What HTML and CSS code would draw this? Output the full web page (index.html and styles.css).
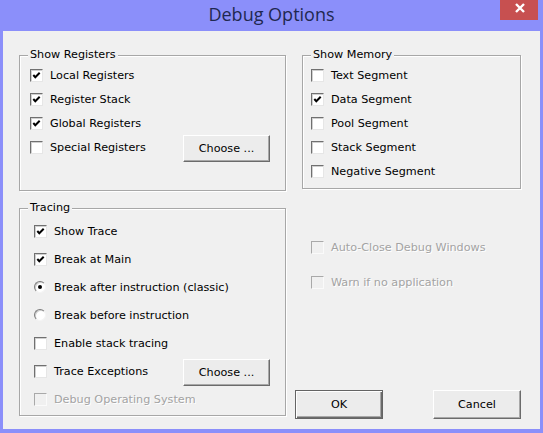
FILE: index.html
```html
<!DOCTYPE html>
<html>
<head>
<meta charset="utf-8">
<link rel="stylesheet" href="styles.css">
</head>
<body>
<div class="window">
  <div class="titlebar">
    <span class="title">Debug Options</span>
    <div class="close"><svg width="12" height="10" viewBox="0 0 12 10"><path d="M2 1 L10 9 M10 1 L2 9" stroke="#fff" stroke-width="2.4" fill="none"/></svg></div>
  </div>
  <div class="client">
    <div class="col-left">
      <div class="group g-registers">
        <span class="legend">Show Registers</span>
        <div class="row"><span class="cb on"><svg width="11" height="11" viewBox="0 0 11 11"><path d="M2.3 5 L4.3 7.2 L8.7 2.8" stroke="#000" stroke-width="2" fill="none"/></svg></span><span>Local Registers</span></div>
        <div class="row"><span class="cb on"><svg width="11" height="11" viewBox="0 0 11 11"><path d="M2.3 5 L4.3 7.2 L8.7 2.8" stroke="#000" stroke-width="2" fill="none"/></svg></span><span>Register Stack</span></div>
        <div class="row"><span class="cb on"><svg width="11" height="11" viewBox="0 0 11 11"><path d="M2.3 5 L4.3 7.2 L8.7 2.8" stroke="#000" stroke-width="2" fill="none"/></svg></span><span>Global Registers</span></div>
        <div class="row"><span class="cb"></span><span>Special Registers</span><button class="btn btn-choose">Choose ...</button></div>
      </div>
      <div class="group g-tracing">
        <span class="legend">Tracing</span>
        <div class="row"><span class="cb on"><svg width="11" height="11" viewBox="0 0 11 11"><path d="M2.3 5 L4.3 7.2 L8.7 2.8" stroke="#000" stroke-width="2" fill="none"/></svg></span><span>Show Trace</span></div>
        <div class="row"><span class="cb on"><svg width="11" height="11" viewBox="0 0 11 11"><path d="M2.3 5 L4.3 7.2 L8.7 2.8" stroke="#000" stroke-width="2" fill="none"/></svg></span><span>Break at Main</span></div>
        <div class="row"><span class="radio on"></span><span>Break after instruction (classic)</span></div>
        <div class="row"><span class="radio"></span><span>Break before instruction</span></div>
        <div class="row"><span class="cb"></span><span>Enable stack tracing</span></div>
        <div class="row"><span class="cb"></span><span>Trace Exceptions</span><button class="btn btn-choose">Choose ...</button></div>
        <div class="row disabled"><span class="cb"></span><span>Debug Operating System</span></div>
      </div>
    </div>
    <div class="col-right">
      <div class="group g-memory">
        <span class="legend">Show Memory</span>
        <div class="row"><span class="cb"></span><span>Text Segment</span></div>
        <div class="row"><span class="cb on"><svg width="11" height="11" viewBox="0 0 11 11"><path d="M2.3 5 L4.3 7.2 L8.7 2.8" stroke="#000" stroke-width="2" fill="none"/></svg></span><span>Data Segment</span></div>
        <div class="row"><span class="cb"></span><span>Pool Segment</span></div>
        <div class="row"><span class="cb"></span><span>Stack Segment</span></div>
        <div class="row"><span class="cb"></span><span>Negative Segment</span></div>
      </div>
      <div class="opts">
        <div class="row disabled"><span class="cb"></span><span>Auto-Close Debug Windows</span></div>
        <div class="row disabled"><span class="cb"></span><span>Warn if no application</span></div>
      </div>
      <div class="buttons">
        <button class="btn btn-default">OK</button>
        <button class="btn">Cancel</button>
      </div>
    </div>
  </div>
</div>
</body>
</html>
```
FILE: styles.css
```css
html, body {
  margin: 0;
  padding: 0;
}
body {
  background: #8b8ffa;
  width: 543px;
  height: 433px;
  overflow: hidden;
  font-family: "DejaVu Sans", "Liberation Sans", sans-serif;
  font-size: 11.2px;
  color: #000;
}
.window {
  height: 433px;
  display: flex;
  flex-direction: column;
}
.titlebar {
  position: relative;
  height: 31px;
  display: flex;
  justify-content: center;
  box-sizing: border-box;
  padding-top: 2px;
}
.title {
  font-family: "Open Sans", "Noto Sans", sans-serif;
  font-size: 18px;
  line-height: 24px;
  color: #1f2850;
}
.close {
  position: absolute;
  top: 0;
  right: 5px;
  width: 38px;
  height: 20px;
  background: #c75050;
  display: flex;
  align-items: center;
  justify-content: center;
  padding-bottom: 4px;
  box-sizing: border-box;
  padding-left: 2px;
}
.client {
  flex: 1;
  margin: 0 3px 4px 3px;
  background: #f0f0f0;
  display: grid;
  grid-template-columns: 267px 219px;
  column-gap: 16px;
  padding: 24px 0 0 16px;
  box-sizing: border-box;
}
.col-left {
  display: flex;
  flex-direction: column;
  gap: 17px;
}
.col-right {
  display: flex;
  flex-direction: column;
}
.group {
  position: relative;
  border: 1px solid #a7a7a7;
  box-shadow: inset 1px 1px 0 #fff, 1px 1px 0 #fff;
  box-sizing: border-box;
}
.legend {
  position: absolute;
  top: -8px;
  left: 8px;
  padding: 0 2px;
  background: #f0f0f0;
  line-height: 14px;
}
.g-registers {
  height: 136px;
  padding: 7px 0 0 10px;
}
.g-tracing {
  height: 208px;
  padding: 8px 0 0 14px;
}
.g-memory {
  height: 134px;
  padding: 7px 0 0 8px;
}
.row {
  height: 24px;
  display: flex;
  align-items: center;
  white-space: nowrap;
}
.g-tracing .row {
  height: 28px;
}
.cb {
  width: 13px;
  height: 13px;
  box-sizing: border-box;
  background: #fff;
  border: 1px solid;
  border-color: #707070 #e6e6e6 #e6e6e6 #707070;
  box-shadow: inset 1px 1px 0 #d0d0d0;
  margin-right: 7px;
  flex: none;
  display: flex;
}
.cb svg {
  display: block;
}
.radio {
  width: 12px;
  height: 12px;
  box-sizing: border-box;
  border-radius: 50%;
  background: #fff;
  border: 1px solid;
  border-color: #7a7a7a #f4f4f4 #f4f4f4 #7a7a7a;
  box-shadow: inset 1px 1px 0 #d0d0d0;
  margin-right: 8px;
  flex: none;
  display: flex;
  align-items: center;
  justify-content: center;
}
.radio.on::after {
  content: "";
  width: 4px;
  height: 4px;
  border-radius: 50%;
  background: #000;
}
.disabled {
  color: #a3a3a3;
  text-shadow: 1px 1px 0 #fff;
}
.disabled .cb {
  background: #f0f0f0;
  border-color: #a9a9a9 #fafafa #fafafa #a9a9a9;
  box-shadow: none;
}
.btn {
  font-family: "DejaVu Sans", "Liberation Sans", sans-serif;
  font-size: 11.2px;
  color: #000;
  background: #ececec;
  border: 1px solid;
  border-color: #fff #6b6b6b #6b6b6b #fff;
  box-shadow: inset -1px -1px 0 #a8a8a8;
  padding: 0;
  margin: 0;
  box-sizing: border-box;
  width: 88px;
  height: 29px;
}
.btn-choose {
  margin-left: auto;
  margin-right: 15px;
  margin-top: 2px;
  width: 87px;
  height: 27px;
}
.btn-default {
  border: 1px solid #646464;
  box-shadow: inset 1px 1px 0 #fff, inset -1px -1px 0 #6b6b6b, inset -2px -2px 0 #a8a8a8;
}
.opts {
  margin-top: 46px;
  padding-left: 9px;
  display: flex;
  flex-direction: column;
  gap: 11px;
}
.buttons {
  margin-top: 96px;
  margin-left: -7px;
  width: 226px;
  display: flex;
  justify-content: space-between;
}
```
